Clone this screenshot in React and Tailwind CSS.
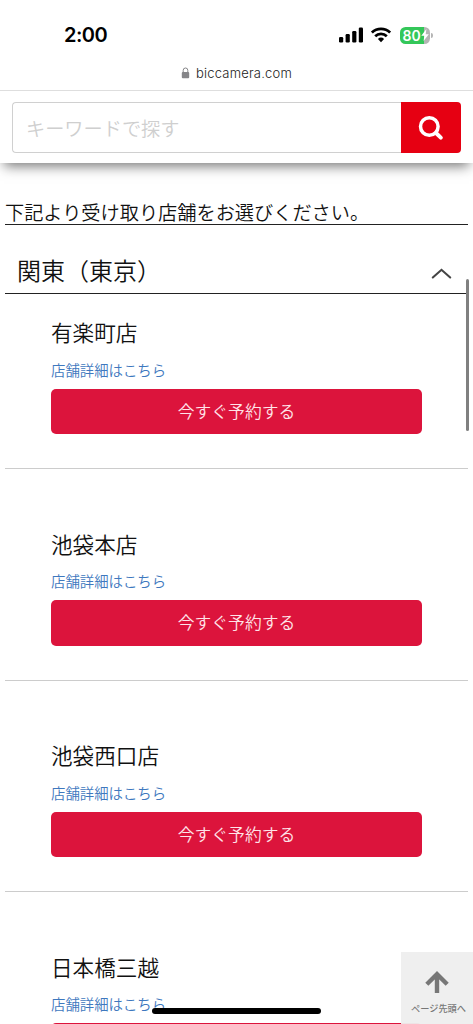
const STORES = ['有楽町店', '池袋本店', '池袋西口店', '日本橋三越'];

function StatusBar() {
  return (
    <div className="flex h-[62px] items-start justify-between pl-[64px] pr-[40px] pt-[22px]">
      <span className="font-['Inter','Liberation_Sans',sans-serif] text-[20px] font-semibold leading-[27px] tracking-[-0.5px] text-black">2:00</span>
      <div className="flex h-[26px] items-center">
        <svg width="24" height="16" viewBox="0 0 24 16" fill="black">
          <rect x="0" y="10" width="4.2" height="5.5" rx="1.2" />
          <rect x="6.6" y="7" width="4.2" height="8.5" rx="1.2" />
          <rect x="13.2" y="4" width="4.2" height="11.5" rx="1.2" />
          <rect x="19.8" y="0.5" width="4.2" height="15" rx="1.2" />
        </svg>
        <svg className="ml-[8.5px]" width="20" height="16" viewBox="0 0 20 16" fill="none" stroke="black" strokeWidth="2.7">
          <path d="M0.9 5.6a13 13 0 0 1 18.2 0" />
          <path d="M4.2 9.2a8.2 8.2 0 0 1 11.6 0" />
          <path d="M6.9 12a4.5 4.5 0 0 1 6.2 0L10 15.2z" fill="black" stroke="none" />
        </svg>
        <div className="relative ml-[9px] flex h-[17px] w-[30px] items-center overflow-hidden rounded-[5.5px] bg-[linear-gradient(to_right,#34c759_80%,#b5b5b5_80%)]">
          <span className="pl-[2.5px] font-['Inter','Liberation_Sans',sans-serif] text-[14px] font-semibold leading-[17px] text-white">80</span>
          <svg className="absolute right-[1px] top-[2.5px]" width="8" height="12" viewBox="0 0 8 12" fill="white">
            <path d="M5.4 0 0.3 6.7h3L2.6 12 7.8 5.2h-3.1z" />
          </svg>
        </div>
        <span className="ml-[1px] h-[5px] w-[2px] rounded-r-full bg-[#b5b5b5]" />
      </div>
    </div>
  );
}

function AddressBar() {
  return (
    <div className="flex h-[29px] items-start border-b border-[#dedede] pl-[181px] pt-px">
      <svg className="mt-[4px]" width="9" height="12" viewBox="0 0 9 12">
        <rect x="0.8" y="5" width="7.4" height="6.2" rx="1" fill="#858588" />
        <path d="M2.2 5.4V3.3a2.3 2.3 0 0 1 4.6 0v2.1" fill="none" stroke="#858588" strokeWidth="1" />
      </svg>
      <span className="ml-[6px] font-['Inter','Liberation_Sans',sans-serif] text-[13px] leading-[20px] tracking-[0.2px] text-[#222]">biccamera.com</span>
    </div>
  );
}

function SearchBar() {
  return (
    <div className="flex h-[72px] px-3 pt-[11px]">
      <input
        type="text"
        placeholder="キーワードで探す"
        className="h-[51px] min-w-0 flex-1 rounded-l-[4px] border border-r-0 border-[#d0d0d0] px-[13px] text-[19.2px] outline-none placeholder:text-[#cfcfcf]"
      />
      <button aria-label="検索" className="flex h-[51px] w-[60px] items-center justify-center rounded-r-[4px] bg-[#e60012]">
        <svg width="26" height="26" viewBox="0 0 26 26" fill="none" stroke="white" strokeWidth="3.5" strokeLinecap="round">
          <circle cx="11.3" cy="11.5" r="8.8" />
          <path d="M18 18l4.8 4.6" strokeWidth="4" />
        </svg>
      </button>
    </div>
  );
}

function Store({ name, first }) {
  return (
    <li className={`${first ? 'pt-[22.5px]' : 'pt-[58.5px]'} border-b border-[#ccc] pb-[34px] pl-[46px] pr-[46px]`}>
      <h3 className="text-[21.6px] leading-8 text-[#111]">{name}</h3>
      <a href="#" className="mt-[10.5px] block text-[14.4px] leading-[22px] text-[#3e78be]">店舗詳細はこちら</a>
      <button className="mt-[8px] block h-[45.5px] w-full rounded-[5px] bg-[#dc143c] text-[16.8px] text-[#ffe3e8]">今すぐ予約する</button>
    </li>
  );
}

export default function App() {
  return (
    <div className="relative h-[1024px] w-[473px] overflow-hidden bg-white font-['Noto_Sans_CJK_JP',sans-serif] font-[350]">
      <header className="relative bg-white shadow-[0_7px_12px_-4px_rgba(0,0,0,0.55)]">
        <StatusBar />
        <AddressBar />
        <SearchBar />
      </header>

      <main className="px-[5px] pt-[37px]">
        <p className="h-[25px] border-b border-[#222] text-[19.2px] leading-6 text-[#111]">下記より受け取り店舗をお選びください。</p>
        <div className="flex h-[68.5px] items-center justify-between border-b border-[#222] pl-3 pr-[16px] pt-[22px]">
          <h2 className="text-[24px] leading-9 text-[#111]">関東（東京）</h2>
          <svg className="mt-[7px]" width="21" height="11" viewBox="0 0 21 11" fill="none" stroke="#444" strokeWidth="2.1" strokeLinecap="round">
            <path d="M1.8 9.5 10.5 1.8l8.7 7.7" />
          </svg>
        </div>
        <ul>
          {STORES.map((name, i) => <Store key={name} name={name} first={i === 0} />)}
        </ul>
      </main>

      {/* Scroll indicator */}
      <div className="absolute right-[4px] top-[279px] h-[152px] w-[3.5px] rounded-full bg-[#808080]" />

      {/* Back to top */}
      <a href="#" className="absolute bottom-0 right-0 flex h-[72px] w-[72px] flex-col items-center bg-[#eeeeee]/95 pt-[19px]">
        <svg width="24" height="22" viewBox="0 0 24 22" fill="none" stroke="#777" strokeWidth="4.4">
          <path d="M12 22V3M1.8 13.2 12 3.2l10.2 10" />
        </svg>
        <span className="ml-[3px] mt-[7px] whitespace-nowrap text-[9.2px] font-medium leading-4 text-[#777]">ページ先頭へ</span>
      </a>

      {/* Home indicator */}
      <div className="absolute bottom-[10px] left-[152px] h-[6px] w-[169px] rounded-full bg-black" />
    </div>
  );
}
